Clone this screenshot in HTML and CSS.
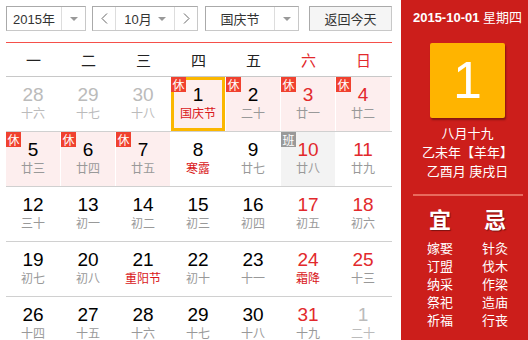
FILE: index.html
```html
<!DOCTYPE html>
<html lang="zh-CN">
<head>
    <meta charset="UTF-8">
    <title>万年历</title>
    <link rel="stylesheet" href="styles.css">
</head>
<body>
    <div class="main">
        <div class="toolbar">
            <div class="select year">
                <span class="select-text">2015年</span>
                <span class="select-arrow"><i class="caret"></i></span>
            </div>
            <div class="month-group">
                <span class="nav"><svg width="7" height="11" viewBox="0 0 7 11"><polyline points="6,0.5 1,5.5 6,10.5" fill="none" stroke="#666" stroke-width="1"/></svg></span>
                <span class="month">10月 <i class="caret"></i></span>
                <span class="nav"><svg width="7" height="11" viewBox="0 0 7 11"><polyline points="1,0.5 6,5.5 1,10.5" fill="none" stroke="#666" stroke-width="1"/></svg></span>
            </div>
            <div class="select holiday">
                <span class="select-text">国庆节</span>
                <span class="select-arrow"><i class="caret"></i></span>
            </div>
            <button class="today-btn">返回今天</button>
        </div>

        <div class="weekdays">
            <span>一</span><span>二</span><span>三</span><span>四</span><span>五</span>
            <span class="weekend">六</span><span class="weekend">日</span>
        </div>

        <div class="week">
            <div class="day other"><b>28</b><em>十六</em></div>
            <div class="day other"><b>29</b><em>十七</em></div>
            <div class="day other"><b>30</b><em>十八</em></div>
            <div class="day rest selected"><span class="badge">休</span><b>1</b><em class="fest">国庆节</em></div>
            <div class="day rest"><span class="badge">休</span><b>2</b><em>二十</em></div>
            <div class="day rest weekend"><span class="badge">休</span><b>3</b><em>廿一</em></div>
            <div class="day rest weekend"><span class="badge">休</span><b>4</b><em>廿二</em></div>
        </div>
        <div class="week">
            <div class="day rest"><span class="badge">休</span><b>5</b><em>廿三</em></div>
            <div class="day rest"><span class="badge">休</span><b>6</b><em>廿四</em></div>
            <div class="day rest"><span class="badge">休</span><b>7</b><em>廿五</em></div>
            <div class="day"><b>8</b><em class="fest">寒露</em></div>
            <div class="day"><b>9</b><em>廿七</em></div>
            <div class="day work weekend"><span class="badge">班</span><b>10</b><em>廿八</em></div>
            <div class="day weekend"><b>11</b><em>廿九</em></div>
        </div>
        <div class="week">
            <div class="day"><b>12</b><em>三十</em></div>
            <div class="day"><b>13</b><em>初一</em></div>
            <div class="day"><b>14</b><em>初二</em></div>
            <div class="day"><b>15</b><em>初三</em></div>
            <div class="day"><b>16</b><em>初四</em></div>
            <div class="day weekend"><b>17</b><em>初五</em></div>
            <div class="day weekend"><b>18</b><em>初六</em></div>
        </div>
        <div class="week">
            <div class="day"><b>19</b><em>初七</em></div>
            <div class="day"><b>20</b><em>初八</em></div>
            <div class="day"><b>21</b><em class="fest">重阳节</em></div>
            <div class="day"><b>22</b><em>初十</em></div>
            <div class="day"><b>23</b><em>十一</em></div>
            <div class="day weekend"><b>24</b><em class="fest">霜降</em></div>
            <div class="day weekend"><b>25</b><em>十三</em></div>
        </div>
        <div class="week">
            <div class="day"><b>26</b><em>十四</em></div>
            <div class="day"><b>27</b><em>十五</em></div>
            <div class="day"><b>28</b><em>十六</em></div>
            <div class="day"><b>29</b><em>十七</em></div>
            <div class="day"><b>30</b><em>十八</em></div>
            <div class="day weekend"><b>31</b><em>十九</em></div>
            <div class="day other"><b>1</b><em>二十</em></div>
        </div>
    </div>

    <div class="side">
        <div class="side-date"><strong>2015-10-01</strong> 星期四</div>
        <div class="big-day">1</div>
        <div class="lunar">
            <p>八月十九</p>
            <p>乙未年【羊年】</p>
            <p>乙酉月 庚戌日</p>
        </div>
        <div class="divider"></div>
        <div class="almanac">
            <div class="almanac-col">
                <h3>宜</h3>
                <p>嫁娶</p><p>订盟</p><p>纳采</p><p>祭祀</p><p>祈福</p>
            </div>
            <div class="almanac-col">
                <h3>忌</h3>
                <p>针灸</p><p>伐木</p><p>作梁</p><p>造庙</p><p>行丧</p>
            </div>
        </div>
    </div>
</body>
</html>
```

FILE: styles.css
```css
body {
    margin: 0;
    display: flex;
    height: 340px;
    overflow: hidden;
    font-family: "Liberation Sans", "Noto Sans CJK SC", sans-serif;
    color: #333;
    background: #fff;
}
.main { width: 401px; padding: 6px 0 0 6px; box-sizing: border-box; }

/* toolbar */
.toolbar { display: flex; height: 25px; }
.select, .month-group, .today-btn {
    box-sizing: border-box;
    height: 25px;
    border: 1px solid #c8c8c8;
    border-top-color: #aaa;
    border-left-color: #aaa;
    font-size: 13px;
    display: flex;
    align-items: center;
    color: #333;
    flex-shrink: 0;
}
.year { width: 80px; }
.holiday { width: 94px; margin-left: 7px; }
.select-text { flex: 1; text-align: center; }
.select-arrow {
    width: 23px;
    height: 100%;
    border-left: 1px solid #ddd;
    display: flex;
    align-items: center;
    justify-content: center;
}
.caret {
    display: inline-block;
    width: 0;
    height: 0;
    border-left: 4px solid transparent;
    border-right: 4px solid transparent;
    border-top: 4px solid #999;
}
.month-group { width: 106px; margin-left: 6px; }
.nav {
    width: 22px;
    height: 100%;
    display: flex;
    align-items: center;
    justify-content: center;
}
.month {
    flex: 1;
    height: 100%;
    border-left: 1px solid #ddd;
    border-right: 1px solid #ddd;
    display: flex;
    align-items: center;
    justify-content: center;
    gap: 6px;
}
.today-btn {
    width: 83px;
    margin-left: 10px;
    justify-content: center;
    background: #f5f5f5;
    font-family: inherit;
    padding: 0;
}

/* calendar grid */
.weekdays {
    display: grid;
    grid-template-columns: repeat(7, 55px);
    width: 386px;
    margin-top: 11px;
    border-top: 1px solid #f5504a;
    border-bottom: 1px solid #c8c8c8;
    height: 33px;
    align-items: center;
    font-size: 15px;
    font-family: "Noto Sans CJK SC", sans-serif;
    color: #222;
}
.weekdays span { text-align: center; }
.weekdays .weekend { color: #e2292c; }

.week {
    display: grid;
    grid-template-columns: repeat(7, 55px);
    width: 386px;
    border-bottom: 1px solid #d0d0d0;
}
.day {
    position: relative;
    height: 54px;
    margin-right: 1px;
    box-sizing: border-box;
    padding-top: 8px;
    text-align: center;
}
.day b {
    display: block;
    font-weight: normal;
    font-size: 19px;
    line-height: 20px;
    color: #000;
}
.day em {
    display: block;
    font-style: normal;
    font-size: 12px;
    line-height: 16px;
    color: #999;
    font-family: "Noto Sans CJK SC", sans-serif;
}
.day.weekend b { color: #e2292c; }
.day em.fest { color: #d9171a; }
.day.other b { color: #bbb; }
.day.other em { color: #bbb; }
.day.rest { background: #fdeeee; }
.day.work { background: #f3f3f3; }
.day.selected { border: 3px solid #fbb700; padding-top: 5px; }

.badge {
    position: absolute;
    left: 0;
    top: 0;
    width: 15px;
    height: 15px;
    line-height: 15px;
    font-size: 12px;
    color: #fff;
    background: #f0412f;
    font-family: "Noto Sans CJK SC", sans-serif;
}
.selected .badge { left: -3px; top: -3px; }
.work .badge { background: #999; }

/* side panel */
.side {
    flex: 1;
    background: #cc1e1b;
    color: #fff;
    padding-left: 6px;
    display: flex;
    flex-direction: column;
    align-items: center;
}
.side-date { margin-top: 10px; font-size: 13px; line-height: 16px; }
.side-date strong { font-weight: bold; }
.big-day {
    margin-top: 17px;
    width: 75px;
    height: 75px;
    background: #ffb400;
    border-radius: 2px;
    box-shadow: 1px 2px 2px rgba(0, 0, 0, 0.35);
    font-size: 52px;
    line-height: 75px;
    text-align: center;
}
.lunar { margin-top: 6px; text-align: center; font-size: 13px; }
.lunar p { margin: 0; line-height: 19px; }
.divider { width: 110px; height: 2px; background: #e86a5d; margin-top: 13px; }
.almanac { display: flex; width: 110px; margin-top: 12px; }
.almanac-col { flex: 1; text-align: center; font-size: 13px; }
.almanac-col h3 {
    margin: 0;
    font-size: 22px;
    line-height: 26px;
    text-shadow: 1px 1px 1px rgba(0, 0, 0, 0.4);
    margin-bottom: 6px;
}
.almanac-col p { margin: 0; line-height: 18px; }
```
